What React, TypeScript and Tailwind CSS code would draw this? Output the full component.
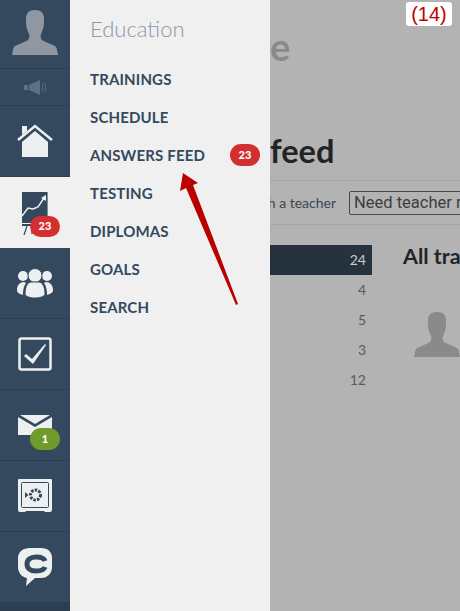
const font = { fontFamily: 'Lato, "Noto Sans", sans-serif' }

const menuItems = ['TRAININGS', 'SCHEDULE', 'ANSWERS FEED', 'TESTING', 'DIPLOMAS', 'GOALS', 'SEARCH']
const counts = ['24', '4', '5', '3', '12']

function Person({ className }: { className: string }) {
  return (
    <svg viewBox="0 0 46 45" className={className}>
      <path
        fill="currentColor"
        d="M23 0c-6 0-9 3-9 9 0 4 0 7 1 10 1 2 1 4 2 5 1 2 0 5-1 6-3 2-9 4-13 6-1 1-2 2-2 4l-1 5h46l-1-5c0-2-1-3-2-4-4-2-10-4-13-6-1-1-2-4-1-6 1-1 1-3 2-5 1-3 1-6 1-10 0-6-3-9-9-9z"
      />
    </svg>
  )
}

function Speaker() {
  return (
    <svg viewBox="0 0 22 15" className="w-[22px] h-[15px] text-[#5a7189]">
      <rect x="0" y="5" width="4" height="5" fill="currentColor" />
      <path fill="currentColor" d="M5 5l11-5v15L5 10z" />
      <path fill="none" stroke="currentColor" strokeWidth="1" d="M18 4c1 2 1 5 0 7M20 2.500c2 3 2 7 0 10" />
    </svg>
  )
}

function Home() {
  return (
    <svg viewBox="0 0 36 34" className="w-[36px] h-[34px] text-[#ecf0f1]">
      <path fill="currentColor" d="M5 2h5v5l-5 4z" />
      <path fill="none" stroke="currentColor" strokeWidth="2.500" d="M1 16L18 2l17 14" />
      <path fill="currentColor" d="M5 18L18 7l13 11v15H5z" />
    </svg>
  )
}

function Chart() {
  return (
    <svg viewBox="0 0 28 44" className="w-[28px] h-[44px]">
      <rect x="1" y="0" width="25" height="31" fill="#34495e" />
      <rect x="26" y="0" width="1" height="31" fill="#7f8c9a" />
      <path fill="none" stroke="#ecf0f1" strokeWidth="1.500" d="M1 24l6-8 5 1 5-2 6-9" />
      <path fill="#ecf0f1" d="M25 3v6l-5-3z" />
      <rect x="1" y="32" width="25" height="2" fill="#34495e" />
      <path fill="none" stroke="#34495e" strokeWidth="1.200" d="M6 34L3 43M11 34l0 8" />
    </svg>
  )
}

function Users() {
  return (
    <svg viewBox="0 0 36 30" className="w-[36px] h-[30px] text-[#ecf0f1]">
      <circle cx="6" cy="8" r="5" fill="currentColor" />
      <circle cx="30" cy="8" r="5" fill="currentColor" />
      <path fill="currentColor" d="M0 22c0-5 3-8 7-8l2 1c-2 3-3 6-3 12-3-1-6-2-6-5zM36 22c0-5-3-8-7-8l-2 1c2 3 3 6 3 12 3-1 6-2 6-5z" />
      <circle cx="18" cy="7.500" r="7" fill="currentColor" stroke="#34495e" strokeWidth="1" />
      <path fill="currentColor" stroke="#34495e" strokeWidth="1" d="M8 26c0-8 3-12 6-12h8c3 0 6 4 6 12 0 2-4 4-10 4S8 28 8 26z" />
    </svg>
  )
}

function Check() {
  return (
    <svg viewBox="0 0 34 34" className="w-[34px] h-[34px]">
      <rect x="1.500" y="1.500" width="31" height="31" rx="2" fill="none" stroke="#ecf0f1" strokeWidth="2.500" />
      <path fill="#ecf0f1" d="M6 19l2-2 6 5L27 7l1 1-13 19z" />
    </svg>
  )
}

function Mail() {
  return (
    <svg viewBox="0 0 34 20" className="w-[34px] h-[20px]">
      <path fill="#ecf0f1" d="M0 2l17 10L34 2v18H0z" />
      <path fill="#ecf0f1" d="M2 0h30L17 9z" />
    </svg>
  )
}

function Safe() {
  return (
    <svg viewBox="0 0 34 34" className="w-[34px] h-[34px]">
      <path fill="#ecf0f1" d="M1 0h32a1 1 0 011 1v30a2 2 0 01-2 2h-5l-1-1H8l-1 1H2a2 2 0 01-2-2V1a1 1 0 011-1z" />
      <rect x="3.500" y="3.500" width="27" height="25" rx="1" fill="none" stroke="#34495e" strokeWidth="1" />
      <circle cx="17.500" cy="16" r="5" fill="none" stroke="#34495e" strokeWidth="3" strokeDasharray="2.500 1.200" />
      <path fill="#34495e" d="M7 13l3.500 3L7 19z" />
    </svg>
  )
}

function Chat() {
  return (
    <svg viewBox="0 0 34 38" className="w-[34px] h-[38px]">
      <path
        fill="#ecf0f1"
        d="M12 0h11c7 0 11 4 11 10v9c0 6-4 11-11 11h-6l-9 8 1-8c-5-1-9-5-9-11v-9C0 4 5 0 12 0z"
      />
      <path
        fill="none"
        stroke="#34495e"
        strokeWidth="5"
        d="M27 13c-1-3-5-4-9-4-6 0-9 3-9 7s3 7 9 7c4 0 8-1 9-4"
      />
    </svg>
  )
}

function Badge({ children, color, className }: { children: string; color: string; className: string }) {
  return (
    <span className={`absolute flex items-center justify-center w-[30px] rounded-[11px] text-white text-[11px] font-black ${color} ${className}`}>
      {children}
    </span>
  )
}

function NavRow({ children, active }: { children: React.ReactNode; active?: boolean }) {
  return (
    <div
      className={`relative h-[71px] shrink-0 flex items-center justify-center border-b ${
        active ? 'bg-[#f0f0f0] border-[#f0f0f0]' : 'border-[#2c3e50]'
      }`}
    >
      {children}
    </div>
  )
}

export default function App() {
  return (
    <div className="relative flex w-[460px] h-[611px] overflow-hidden bg-[#b3b3b3]" style={font}>
      <nav className="w-[70px] shrink-0 flex flex-col bg-[#34495e]">
        <div className="h-[69px] shrink-0 flex items-center justify-center border-b border-[#2c3e50]">
          <Person className="w-[46px] h-[45px] mt-[-3px] text-[#8e97a2]" />
        </div>
        <div className="h-[37px] shrink-0 flex items-center justify-center border-b border-[#2c3e50]">
          <Speaker />
        </div>
        <NavRow><Home /></NavRow>
        <NavRow active>
          <div className="mt-[3px]"><Chart /></div>
          <Badge color="bg-[#d32f2f]" className="h-[21px] left-[30px] top-[39px]">23</Badge>
        </NavRow>
        <NavRow><Users /></NavRow>
        <NavRow><Check /></NavRow>
        <NavRow>
          <Mail />
          <Badge color="bg-[#6f9a2c]" className="h-[22px] left-[30px] top-[38px]">1</Badge>
        </NavRow>
        <NavRow><Safe /></NavRow>
        <NavRow><Chat /></NavRow>
        <div className="flex-1 bg-[#2c3e50]" />
      </nav>

      <aside className="w-[200px] shrink-0 bg-[#f0f0f0] pl-[20px] pt-[14px]">
        <div className="text-[22px] leading-[30px] text-[#8a98a9] font-light">Education</div>
        <ul className="mt-[16px]">
          {menuItems.map((item) => (
            <li key={item} className="relative h-[38px] flex items-center text-[15px] tracking-[0.15px] font-bold text-[#34495e]">
              {item}
              {item === 'ANSWERS FEED' && (
                <Badge color="bg-[#d32f2f]" className="h-[22px] left-[140px] top-[8px]">23</Badge>
              )}
            </li>
          ))}
        </ul>
      </aside>

      {/* page behind the menu, only its right part shows */}
      <main className="flex-1 min-w-0 overflow-hidden">
        <div className="h-[130px] pt-[24px] text-[38px] font-bold leading-[44px] text-[#8a8a8a]">e</div>
        <h1 className="h-[44px] text-[32.500px] font-bold leading-[42px] text-[#1f2428]">feed</h1>
        <div className="mt-[6px] h-[45px] flex items-center border-y border-[#a6a6a6]">
          <div className="w-[66px] shrink-0 flex justify-end overflow-hidden">
            <span className="text-[14px] text-[#3c4650] whitespace-nowrap">with a teacher</span>
          </div>
          <div
            className="ml-[13px] shrink-0 w-[140px] h-[24px] border border-[#4a4a4a] rounded-[2px] pl-[4px] text-[16.500px] leading-[21px] text-[#3d3d3d] whitespace-nowrap"
            style={{ fontFamily: 'Roboto, sans-serif' }}
          >
            Need teacher review
          </div>
        </div>
        <div className="mt-[20px] flex">
          <div className="w-[102px] shrink-0 text-[14px] text-[#555d66]">
            {counts.map((count, i) => (
              <div
                key={count}
                className={`h-[30px] flex items-center justify-end pr-[6px] pb-[2px] ${i === 0 ? 'bg-[#26333f] text-[#c5ccd2]' : ''}`}
              >
                {count}
              </div>
            ))}
          </div>
          <div className="pl-[31px] min-w-0">
            <div className="text-[21.500px] font-bold leading-[22px] text-[#1f2428] whitespace-nowrap">All tra</div>
            <Person className="ml-[11px] mt-[45px] w-[46px] h-[45px] text-[#8a8a8a]" />
          </div>
        </div>
      </main>

      {/* counter */}
      <div
        className="absolute left-[406px] top-[2px] w-[46px] h-[24px] rounded-[3px] bg-white text-center text-[20px] leading-[25px] text-[#c00000]"
        style={{ fontFamily: '"Liberation Sans", sans-serif' }}
      >
        (14)
      </div>

      {/* annotation arrow */}
      <svg viewBox="0 0 460 611" className="absolute inset-0 w-[460px] h-[611px] pointer-events-none">
        <path fill="#b80000" d="M183 173L198 183 193 185 238 304 236 305 186 188 180 191z" />
      </svg>
    </div>
  )
}
